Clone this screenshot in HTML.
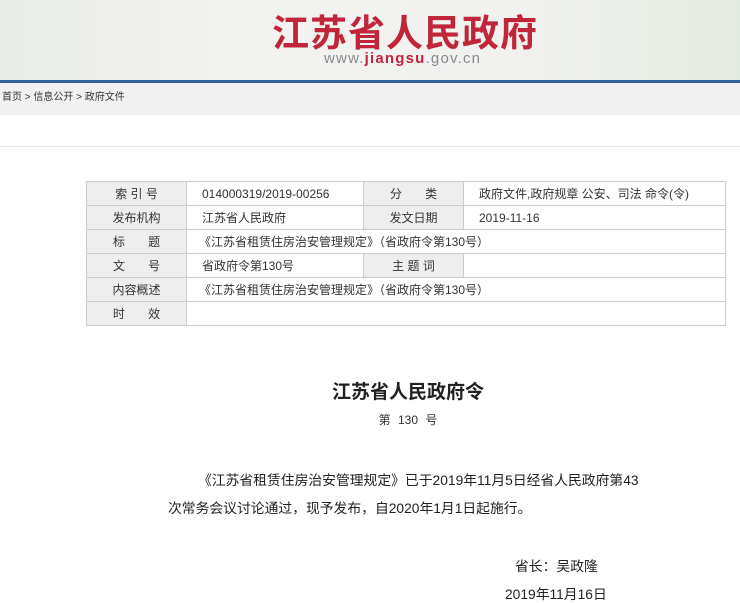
<!DOCTYPE html>
<html><head><meta charset="utf-8"><style>
body{margin:0;width:740px;height:603px;overflow:hidden;background:#fff;font-family:"Liberation Sans","Noto Sans CJK SC",sans-serif;color:#333;position:relative}
.hdr{position:absolute;left:0;top:0;width:740px;height:80px;background:linear-gradient(90deg,#e9ece7,#f2f2f0 30%,#f1f1ef 70%,#e4ebe0)}
.t1{position:absolute;left:272px;top:6px;font-size:37px;font-weight:bold;color:#c0253a;letter-spacing:1px;font-family:"Noto Sans CJK SC",sans-serif;line-height:48px}
.t2{position:absolute;left:324px;top:50px;font-size:15px;color:#8a8a8a;letter-spacing:1.2px}
.t2 b{color:#c0253a}
.bar{position:absolute;left:0;top:80px;width:740px;height:3px;background:#33619a}
.bc{position:absolute;left:0;top:83px;width:740px;height:32px;background:#f1f1f1;font-size:10px;line-height:30px;color:#333;padding-left:2px}
.ln{position:absolute;left:0;top:146px;width:740px;height:1px;background:#e3e3e3}
table{position:absolute;left:86px;top:181px;border-collapse:collapse;font-size:12px}
td{border:1px solid #ccc;height:23px;padding:0;color:#333}
td.l{background:#eee;text-align:center}
td.v{padding-left:15px}
.ti{position:absolute;left:0;width:816px;top:377px;text-align:center;font-size:19px;font-weight:bold;color:#222}
.no{position:absolute;left:0;width:816px;top:411px;text-align:center;font-size:12px;color:#333;word-spacing:4px}
.p{position:absolute;font-size:13.8px;color:#222}
</style></head><body>
<div class="hdr"></div>
<div class="t1">江苏省人民政府</div>
<div class="t2">www.<b>jiangsu</b>.gov.cn</div>
<div class="bar"></div>
<div class="bc">首页 &gt; 信息公开 &gt; 政府文件</div>
<div class="ln"></div>
<table>
<tr><td class="l" style="width:99px">索 引 号</td><td class="v" style="width:161px">014000319/2019-00256</td><td class="l" style="width:99px">分&nbsp;&nbsp;&nbsp;&nbsp;&nbsp;&nbsp;&nbsp;类</td><td class="v" style="width:246px">政府文件,政府规章 公安、司法 命令(令)</td></tr>
<tr><td class="l">发布机构</td><td class="v">江苏省人民政府</td><td class="l">发文日期</td><td class="v">2019-11-16</td></tr>
<tr><td class="l">标&nbsp;&nbsp;&nbsp;&nbsp;&nbsp;&nbsp;&nbsp;题</td><td class="v" colspan="3" style="padding-left:12px">《江苏省租赁住房治安管理规定》（省政府令第130号）</td></tr>
<tr><td class="l">文&nbsp;&nbsp;&nbsp;&nbsp;&nbsp;&nbsp;&nbsp;号</td><td class="v">省政府令第130号</td><td class="l">主 题 词</td><td class="v"></td></tr>
<tr><td class="l">内容概述</td><td class="v" colspan="3" style="padding-left:12px">《江苏省租赁住房治安管理规定》（省政府令第130号）</td></tr>
<tr><td class="l">时&nbsp;&nbsp;&nbsp;&nbsp;&nbsp;&nbsp;&nbsp;效</td><td class="v" colspan="3"></td></tr>
</table>
<div class="ti">江苏省人民政府令</div>
<div class="no">第 130 号</div>
<div class="p" style="left:198px;top:469px">《江苏省租赁住房治安管理规定》已于2019年11月5日经省人民政府第43</div>
<div class="p" style="left:168px;top:497px">次常务会议讨论通过，现予发布，自2020年1月1日起施行。</div>
<div class="p" style="left:515px;top:555px">省长：吴政隆</div>
<div class="p" style="left:505px;top:583px">2019年11月16日</div>
</body></html>
